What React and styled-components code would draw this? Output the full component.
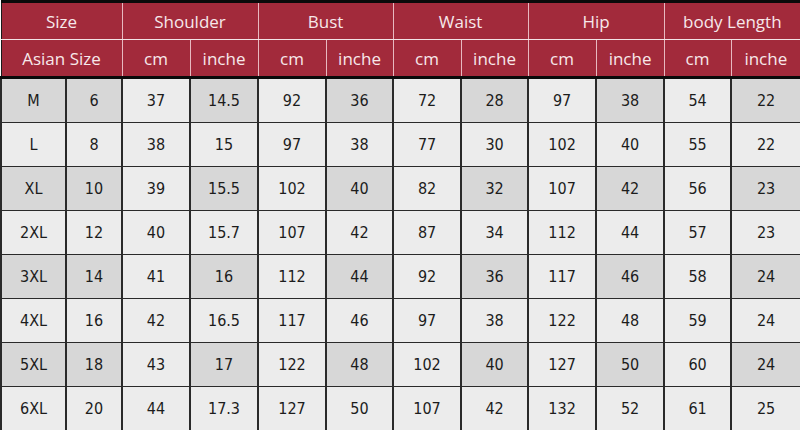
import React from 'react'
import styled, { createGlobalStyle } from 'styled-components'

const GlobalStyle = createGlobalStyle`
    body {
        margin: 0;
        background: #ffffff;
        overflow: hidden;
    }
`

const widths = [65, 56, 68, 68, 68, 67, 68, 67, 68, 68, 67, 70]

const groups = ['Shoulder', 'Bust', 'Waist', 'Hip', 'body Length']

const rows = [
    ['M', '6', '37', '14.5', '92', '36', '72', '28', '97', '38', '54', '22'],
    ['L', '8', '38', '15', '97', '38', '77', '30', '102', '40', '55', '22'],
    ['XL', '10', '39', '15.5', '102', '40', '82', '32', '107', '42', '56', '23'],
    ['2XL', '12', '40', '15.7', '107', '42', '87', '34', '112', '44', '57', '23'],
    ['3XL', '14', '41', '16', '112', '44', '92', '36', '117', '46', '58', '24'],
    ['4XL', '16', '42', '16.5', '117', '46', '97', '38', '122', '48', '59', '24'],
    ['5XL', '18', '43', '17', '122', '48', '102', '40', '127', '50', '60', '24'],
    ['6XL', '20', '44', '17.3', '127', '50', '107', '42', '132', '52', '61', '25'],
]

function App() {
    return (
        <>
            <GlobalStyle />
            <Chart>
                <colgroup>
                    {widths.map((w, i) => (
                        <col key={i} style={{ width: w }} />
                    ))}
                </colgroup>
                <thead>
                    <tr>
                        <Head colSpan={2} $top>Size</Head>
                        {groups.map((g) => (
                            <Head key={g} colSpan={2} $top>{g}</Head>
                        ))}
                    </tr>
                    <tr>
                        <Head colSpan={2}>Asian Size</Head>
                        {groups.map((g) => (
                            <React.Fragment key={g}>
                                <Head>cm</Head>
                                <Head>inche</Head>
                            </React.Fragment>
                        ))}
                    </tr>
                </thead>
                <tbody>
                    {rows.map((row, r) => (
                        <tr key={row[0]}>
                            {row.map((v, c) => (
                                <Cell
                                    key={c}
                                    $first={r === 0}
                                    $shade={r % 2 === 0 && (c < 2 || c % 2 === 1)}
                                >
                                    {v}
                                </Cell>
                            ))}
                        </tr>
                    ))}
                </tbody>
            </Chart>
        </>
    )
}

export default App

const Chart = styled.table`
    width: 800px;
    table-layout: fixed;
    border-collapse: collapse;
    border-top: 3px solid #0a0a0a;
    border-left: 1px solid #1a1a1a;
    border-right: 2px solid #1a1a1a;
`

const Head = styled.th`
    height: 36px;
    padding: 0;
    background-color: #a22a3b;
    color: #f7e8ea;
    font-family: "Open Sans", "Noto Sans", sans-serif;
    font-weight: 400;
    font-size: 17px;
    text-align: center;
    border-left: 1px solid #e8b9c0;
    border-right: 1px solid #e8b9c0;
    border-bottom: ${(p) => (p.$top ? '1px solid #f3e3e5' : '3px solid #0a0a0a')};
    &:first-child {
        border-left: 1px solid #1a1a1a;
    }
    &:last-child {
        border-right: 2px solid #1a1a1a;
    }
`

const Cell = styled.td`
    height: 43px;
    padding: 0;
    background-color: ${(p) => (p.$shade ? '#d7d7d7' : '#ececec')};
    color: #1c1c1c;
    font-family: "DejaVu Sans Condensed", "Open Sans", sans-serif;
    font-size: 16px;
    text-align: center;
    border: 1px solid #2a2a2a;
    border-left-width: 2px;
    border-top: ${(p) => (p.$first ? '3px solid #0a0a0a' : '1px solid #2a2a2a')};
`
